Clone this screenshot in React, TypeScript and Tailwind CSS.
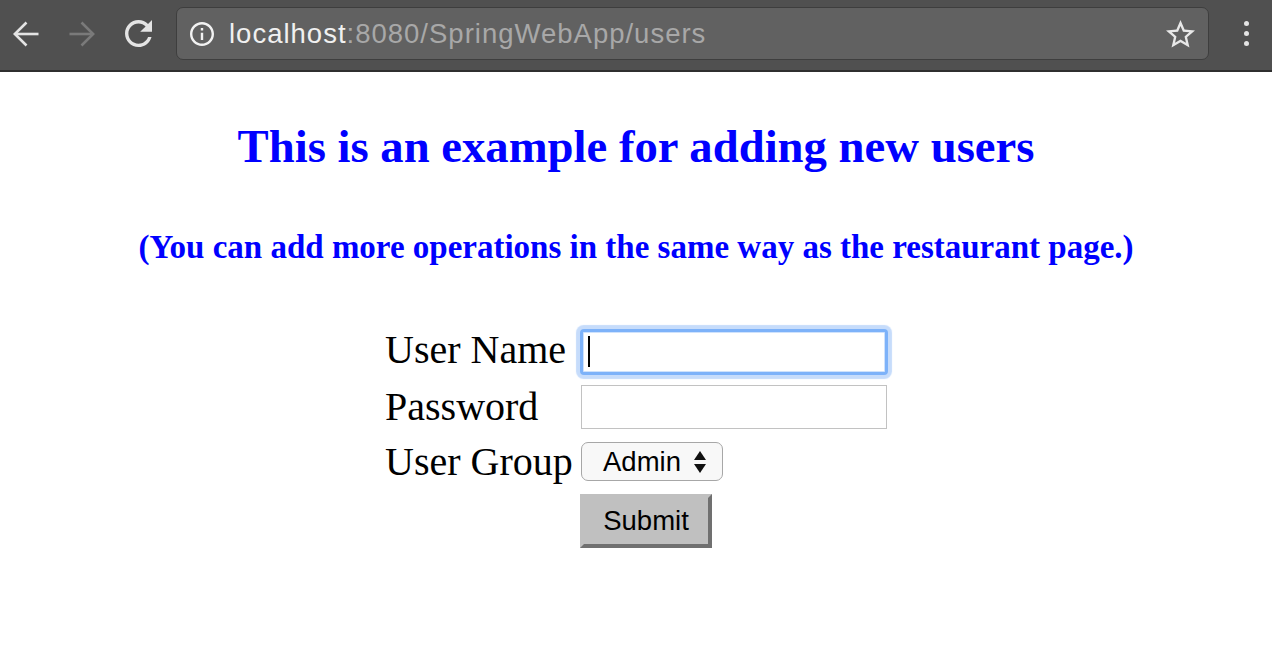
const serif = "font-['Liberation_Serif','Times_New_Roman',serif]"
const sans = "font-['Liberation_Sans',Arial,sans-serif]"

function BackArrow({ color }: { color: string }) {
  return (
    <svg width="26" height="26" viewBox="0 0 26 26" fill="none" stroke={color} strokeWidth="2.6">
      <path d="M1.8 13H25.5" />
      <path d="M13.5 1.5L1.8 13L13.5 24.5" />
    </svg>
  )
}

function ForwardArrow({ color }: { color: string }) {
  return (
    <svg width="26" height="26" viewBox="0 0 26 26" fill="none" stroke={color} strokeWidth="2.6">
      <path d="M0.5 13H24.2" />
      <path d="M12.5 1.5L24.2 13L12.5 24.5" />
    </svg>
  )
}

function Toolbar() {
  return (
    <div className="flex h-[72px] items-start border-b-[2px] border-[#2f2f2f] bg-[#505050]">
      <div className="ml-[13px] mt-[21px]">
        <BackArrow color="#e4e4e4" />
      </div>
      <div className="ml-[30px] mt-[21px]">
        <ForwardArrow color="#7a7a7a" />
      </div>
      {/* reload */}
      <svg className="ml-[30px] mt-[20px]" width="27" height="27" viewBox="4 4 16 16" fill="#e4e4e4">
        <path d="M17.65 6.35C16.2 4.9 14.21 4 12 4c-4.42 0-7.990 3.58-7.99 8s3.57 8 7.99 8c3.73 0 6.84-2.55 7.73-6h-2.08c-.82 2.33-3.04 4-5.65 4-3.310 0-6-2.69-6-6s2.69-6 6-6c1.66 0 3.14.69 4.22 1.78L13 11h7V4l-2.35 2.35z" />
      </svg>

      {/* address bar */}
      <div className="ml-[24px] mt-[7px] flex h-[53px] w-[1033px] items-center rounded-[7px] border border-[#3e3e3e] bg-[#616161] pl-[13px] pr-[13px]">
        <svg width="24" height="24" viewBox="2 2 20 20" fill="#f2f2f2">
          <path d="M11 7h2v2h-2zm0 4h2v6h-2zm1-9C6.48 2 2 6.48 2 12s4.48 10 10 10 10-4.48 10-10S17.52 2 12 2zm0 18c-4.41 0-8-3.59-8-8s3.59-8 8-8 8 3.59 8 8-3.59 8-8 8z" />
        </svg>
        <span className={`${sans} ml-[15px] text-[27.5px] leading-[32px] tracking-[1px] text-[#f0f0f0]`}>
          localhost<span className="text-[#a8a8a8]">:8080/SpringWebApp/users</span>
        </span>
        <svg className="ml-auto" width="29" height="28" viewBox="2 2 20 19.3" fill="#e8e8e8">
          <path d="M22 9.24l-7.19-.62L12 2 9.19 8.63 2 9.24l5.46 4.73L5.82 21 12 17.27 18.18 21l-1.63-7.03L22 9.24zM12 15.4l-3.76 2.27 1-4.28-3.32-2.88 4.38-.38L12 6.1l1.71 4.04 4.38.38-3.32 2.88 1 4.28L12 15.4z" />
        </svg>
      </div>

      {/* menu */}
      <div className="ml-[35px] mt-[21px] flex flex-col gap-[5px]">
        <span className="h-[5px] w-[5px] rounded-full bg-[#e4e4e4]" />
        <span className="h-[5px] w-[5px] rounded-full bg-[#e4e4e4]" />
        <span className="h-[5px] w-[5px] rounded-full bg-[#e4e4e4]" />
      </div>
    </div>
  )
}

function UserForm() {
  return (
    <form className="mx-auto mt-[61px] grid w-fit grid-cols-[196px_306px] items-start">
      {/* User Name */}
      <label className={`${serif} text-[40px] leading-[46px] text-black`}>User Name</label>
      <div className="relative mt-[3px] h-[44px] w-[306px] rounded-[3px] border-[2px] border-[#7db2f9] bg-white shadow-[inset_0_0_0_1px_#cfe2fc,0_0_0_1px_#7db2f9,0_0_1px_5px_#c6dcfb]">
        <span className="absolute left-[5px] top-[4px] h-[31px] w-[2px] bg-black" />
      </div>

      {/* Password */}
      <label className={`${serif} mt-[10px] text-[40px] leading-[46px] text-black`}>Password</label>
      <input
        type="password"
        className="mt-[11px] h-[44px] w-[306px] border border-[#c2c2c2] bg-white outline-none"
      />

      {/* User Group */}
      <label className={`${serif} mt-[9px] text-[40px] leading-[46px] text-black`}>User Group</label>
      <div className="mt-[12px] flex h-[39px] w-[142px] items-center rounded-[7px] border border-[#a7a7a7] bg-[#f8f8f8] pl-[21px]">
        <span className={`${sans} text-[27.5px] leading-[30px] text-black`}>Admin</span>
        <svg className="ml-[12px]" width="14" height="24" viewBox="0 0 14 24" fill="#111">
          <path d="M7 1L13 10H1Z" />
          <path d="M7 23L13 14H1Z" />
        </svg>
      </div>

      {/* Submit */}
      <div />
      <button
        type="button"
        className={`${sans} -ml-px mt-[9px] h-[54px] w-[132px] border-[4px] border-b-[#707070] border-l-[#c0c0c0] border-r-[#707070] border-t-[#c0c0c0] bg-[#c0c0c0] text-[27.5px] leading-[30px] text-black`}
      >
        Submit
      </button>
    </form>
  )
}

export default function App() {
  return (
    <div className="min-h-[648px] bg-white">
      <Toolbar />
      <h1 className={`${serif} mt-[47px] text-center text-[46.7px] font-bold leading-[54px] text-[#0000ff]`}>
        This is an example for adding new users
      </h1>
      <h3 className={`${serif} mt-[55px] text-center text-[33px] font-bold leading-[38px] text-[#0000ff]`}>
        (You can add more operations in the same way as the restaurant page.)
      </h3>
      <UserForm />
    </div>
  )
}
